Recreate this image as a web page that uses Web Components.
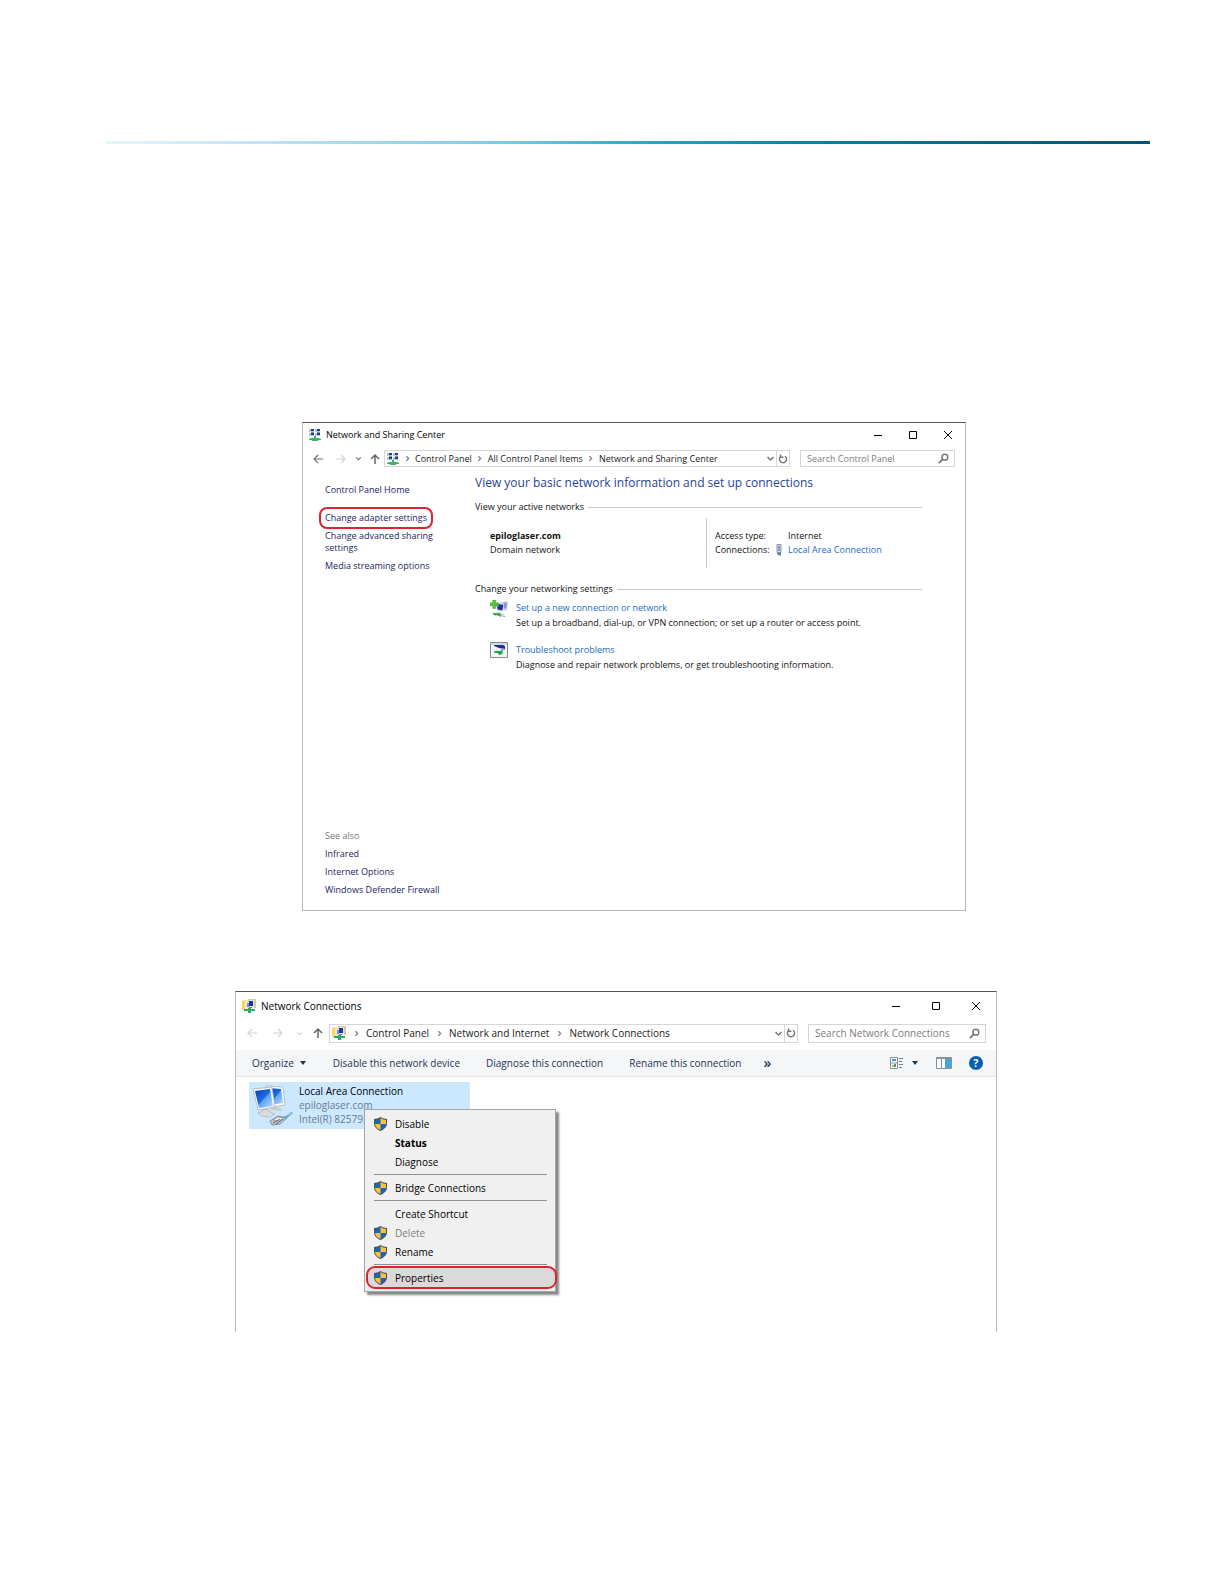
<!DOCTYPE html>
<html lang="en">
<head>
<meta charset="utf-8">
<title>Network setup</title>
<style>
  body {
    margin: 0;
    background: #fff;
    color: #111;
    font-family: "Open Sans", "Noto Sans", sans-serif;
  }

  main {
    display: flex;
    flex-direction: column;
  }

  gradient-rule { margin: 141px 74px 278px 106px; }

  .sharing {
    --text: 9px;
    --bar-height: 23px;
    --nav-height: 25px;
    --box-height: 17px;
    --nav-button: 23px;
    --nav-small: 13px;
    --nav-up: 19px;
    --crumb-gap: 16px;
    --search-width: 155px;
    --icon: 12px;
    --control: 35px;
    --edge: #b4b8b8;
    margin: 0 258px 80px 302px;
    min-height: 487px;
  }

  .connections {
    --text: 10px;
    --bar-height: 27px;
    --nav-height: 28px;
    --box-height: 19px;
    --nav-button: 26px;
    --nav-small: 16px;
    --nav-up: 22px;
    --crumb-gap: 20px;
    --search-width: 178px;
    --icon: 14px;
    --control: 40px;
    --edge: #b4b8b8;
    --edge-bottom: 0;
    margin: 0 227px 0 235px;
    min-height: 340px;
  }
</style>
</head>
<body>
<main>
  <gradient-rule></gradient-rule>

  <app-window class="sharing" heading="Network and Sharing Center" icon="sharing">
    <nav-bar slot="nav" icon="sharing" search="Search Control Panel" back
      path="Control Panel/All Control Panel Items/Network and Sharing Center"></nav-bar>
    <sharing-center></sharing-center>
  </app-window>

  <app-window class="connections" heading="Network Connections" icon="folder">
    <nav-bar slot="nav" icon="folder" search="Search Network Connections"
      path="Control Panel/Network and Internet/Network Connections"></nav-bar>
    <command-bar slot="nav"></command-bar>
    <connection-item name="Local Area Connection" domain="epiloglaser.com" device="Intel(R) 82579L">
      <context-menu>
        <menu-item shield>Disable</menu-item>
        <menu-item strong>Status</menu-item>
        <menu-item>Diagnose</menu-item>
        <hr>
        <menu-item shield>Bridge Connections</menu-item>
        <hr>
        <menu-item>Create Shortcut</menu-item>
        <menu-item shield disabled>Delete</menu-item>
        <menu-item shield>Rename</menu-item>
        <hr>
        <menu-item shield marked>Properties</menu-item>
      </context-menu>
    </connection-item>
  </app-window>
</main>

<script>
const icons = {
  sharing: ['0 0 12 12', `
    <path fill="#b4c4ea" d="M0 0h5v3H0zM6 0h5v3H6zM0 4h5v3H0zM6 4h5v3H6z"/>
    <path fill="#24389c" d="M2 0h3v2H2zM8 0h3v2H8zM2 4h3v2H2zM8 4h3v2H8z"/>
    <path fill="#8490b4" d="M2 3h3v1H2zM8 3h3v1H8z"/>
    <path fill="#35b56a" d="M5 7h2v2h3l2 1v1H9v1H3v-1H0v-1l2-1h3z"/>`],
  folder: ['0 0 14 14', `
    <path fill="#f6d860" d="M0 2l3-1v10H0z"/><path fill="#fbeaa0" d="M3 1h3v9H3z"/>
    <path fill="#d8cd90" d="M6 0h8v9H6z"/><path fill="#dfe5ef" d="M4 3h4v6H4zM7 1h5v8H7z"/>
    <path fill="#1d35a8" d="M7 2h4v5H7z"/><path fill="#6f8fe0" d="M5 4h2v4H5z"/>
    <path fill="#777f85" d="M7 8h3v1H7z"/>
    <path fill="#28a869" d="M6 9h3v1h4v2H9v2H6v-2H2v-2h4z"/>`],
  back: ['0 0 12 12', '<path fill="none" stroke="currentColor" stroke-width="1.2" d="M11 6H2M6 2 2 6l4 4"/>'],
  forward: ['0 0 12 12', '<path fill="none" stroke="currentColor" stroke-width="1.2" d="M1 6h9M6 2l4 4-4 4"/>'],
  up: ['0 0 12 12', '<path fill="none" stroke="currentColor" stroke-width="1.5" d="M6 11V2M2 6l4-4 4 4"/>'],
  down: ['0 0 12 12', '<path fill="none" stroke="currentColor" stroke-width="2" d="M2 4l4 4 4-4"/>'],
  crumb: ['0 0 12 12', '<path fill="none" stroke="currentColor" stroke-width="2" d="M4 2l4 4-4 4"/>'],
  refresh: ['0 0 12 12', '<path fill="none" stroke="currentColor" stroke-width="1.8" d="M8.500 2.700A4.300 4.300 0 1 1 3.500 2.700M3 .5v3.300h3.500"/>'],
  search: ['0 0 12 12', '<g fill="none" stroke="currentColor"><circle cx="7.500" cy="4.500" r="3.200" stroke-width="1.600"/><path stroke-width="2" d="M5 7 1 11"/></g>'],
  minimize: ['0 0 10 10', '<path stroke="currentColor" d="M1 5.500h8"/>'],
  maximize: ['0 0 10 10', '<path fill="none" stroke="currentColor" d="M1.500 1.500h7v7h-7z"/>'],
  close: ['0 0 10 10', '<path stroke="currentColor" d="M1 1l8 8M9 1 1 9"/>'],
  caret: ['0 0 8 8', '<path fill="currentColor" d="M1 2h6L4 6z"/>'],
  plug: ['0 0 8 12', `
    <path fill="#d3daea" stroke="#8893ad" d="M2 .5h4v8H2z"/><path stroke="#55608a" d="M4 2v5"/>
    <path fill="#4b6f9c" d="M2 9h4v2H3z"/><path fill="#72b6c6" d="M4 10h2v2H4z"/>`],
  setup: ['0 0 19 19', `
    <path fill="#ccd1ef" d="M11 2l8-1-1 10h-6z"/><path fill="#8b91c6" d="M14 3h4l-1 6h-3z"/>
    <path fill="#dce2f4" d="M6 3l9 1-1 8-7-1z"/><path fill="#20309c" d="M7 4l7 1-1 6-5-1z"/>
    <path fill="#5570cf" d="M7 4l3 1-2 4z"/>
    <path fill="#5cc034" stroke="#3c9a24" stroke-width=".5" d="M3 0h3v3h3v3H6v3H3V6H0V3h3z"/>
    <path fill="#b6dfc8" d="M1 14l7-1 8 2-4 2z"/><path fill="#25a05a" d="M3 14h7l1-1v5l-3-2H4z"/>
    <path fill="#8ba096" d="M11 16l5 1v1l-5-1z"/>`],
  trouble: ['0 0 18 16', `
    <path fill="#f5f7f8" stroke="#858b90" d="M.5.5h17v15H.5z"/><path fill="#d5dade" d="M1 1h16v2H1z"/>
    <path fill="#1c2f9c" d="M4 3h9l2 1v3l-6-1-5-2z"/><path fill="#8ea3dc" d="M10 6l5 1v1h-4z"/>
    <path fill="#bde0ca" d="M2 9l6-1 7 3-4 2z"/><path fill="#2a9f55" d="M5 9h5l3-1-1 4-3 1-1-2H4z"/>`],
  details: ['0 0 14 12', `
    <path fill="#fff" stroke="#8b9096" d="M.5.5h7v11h-7zM.5 6h7"/>
    <path fill="#4c91c9" d="M2 2h4v2H2z"/><path fill="#d7ac43" d="M2 8h2v2H2z"/><path fill="#479b66" d="M4 7h2v3H4z"/>
    <path stroke="#777d84" d="M9 1.500h4M9 4.500h3M9 7.500h4M9 10.500h3"/>`],
  pane: ['0 0 16 12', `
    <path fill="#fff" stroke="#8b9096" d="M.5.5h15v11H.5z"/><path stroke="#8b9096" d="M5.500 1v11M.5 1.500h15"/>
    <path fill="#45a2e4" d="M9 2h6v9H9z"/>`],
  shield: ['0 0 13 14', `
    <path fill="#4b545c" d="M6.500 0C8.500 1.300 10.500 2 13 2v4c0 4-3 6.500-6.500 8C3 12.500 0 10 0 6V2c2.500 0 4.500-.7 6.500-2z"/>
    <path fill="#1767b5" d="M6.500 1v6H1V3c2 0 3.800-.7 5.500-2zM6.500 7H12c-.3 3-2.500 4.800-5.500 6z"/>
    <path fill="#fac03d" d="M6.500 1C8.200 2.300 10 3 12 3v4H6.500zM1 7h5.500v6C3.500 11.800 1.300 10 1 7z"/>`],
  computers: ['0 0 42 42', `
    <defs><linearGradient id="scr" x1="0" y1="0" x2="1" y2="1">
      <stop offset="0" stop-color="#0a3cb4"/><stop offset=".5" stop-color="#1e6ee6"/>
      <stop offset=".52" stop-color="#5ba2f4"/><stop offset="1" stop-color="#b9dcfb"/></linearGradient></defs>
    <path fill="#c7cdd2" d="M19 21l9 2 3 3-12-1z"/>
    <path fill="#f6f8f9" stroke="#a6adb2" stroke-width=".7" d="M14 1l17 1 2 18-17 3z"/>
    <path fill="url(#scr)" d="M16 3l13 1 2 14-14 2z"/>
    <path fill="#d9dcdf" stroke="#a3a9ae" stroke-width=".6" d="M10 24l7 1 1 2 5 2-5 3-8-1-4-3 5-2z"/>
    <path fill="#f6f8f9" stroke="#a6adb2" stroke-width=".7" d="M1 4l19-2 3 20-17 3z"/>
    <path fill="url(#scr)" d="M3 6l15-2 3 17-14 2z"/>
    <path fill="#bfc5c8" stroke="#777f84" stroke-width=".8" d="M18 36l8-5 9 2-7 6-8 1z"/>
    <path fill="#eceeef" stroke="#81898e" stroke-width=".6" d="M21 35l5-3 6 1-5 3z"/>
    <path fill="none" stroke="#555d63" stroke-width=".8" d="M21 38l7-4M24 39l7-5"/>
    <path fill="#5ba8cf" d="M31 32l8-5 2 1-7 6z"/><path stroke="#d9e9f0" d="M33 31l6-3"/>`]
};

class UiIcon extends HTMLElement {
  connectedCallback() {
    const [box, shapes] = icons[this.getAttribute('name')];
    const [, , w, h] = box.split(' ');
    const width = this.getAttribute('size') || `${w}px`;
    this.attachShadow({ mode: 'open' }).innerHTML = `
      <style>
        :host { display: inline-flex; flex: none; align-items: center; justify-content: center; }
        svg { display: block; width: ${width}; aspect-ratio: ${w} / ${h}; }
      </style>
      <svg viewBox="${box}" aria-hidden="true">${shapes}</svg>
    `;
  }
}
customElements.define('ui-icon', UiIcon);

class GradientRule extends HTMLElement {
  connectedCallback() {
    this.attachShadow({ mode: 'open' }).innerHTML = `
      <style>
        :host {
          display: block;
          height: 3px;
          background: linear-gradient(90deg, #e6f6fb 0%, #b5e0f2 18%, #79cbea 38%, #2ba3c9 52%, #0882a8 67%, #00668e 84%, #00527c 100%);
        }
      </style>
    `;
  }
}
customElements.define('gradient-rule', GradientRule);

class AppWindow extends HTMLElement {
  connectedCallback() {
    const heading = this.getAttribute('heading');
    this.attachShadow({ mode: 'open' }).innerHTML = `
      <style>
        :host {
          display: flex;
          flex-direction: column;
          border: 1px solid var(--edge);
          border-top-color: #555;
          border-bottom-width: var(--edge-bottom, 1px);
          background: #fff;
          font-size: var(--text);
        }
        header {
          display: flex;
          align-items: center;
          height: var(--bar-height);
          padding-left: 6px;
        }
        h1 {
          flex: 1;
          margin: 0 0 0 5px;
          font-size: inherit;
          font-weight: 400;
          color: #000;
        }
        button {
          display: flex;
          justify-content: center;
          width: var(--control);
          padding: 0;
          border: 0;
          background: none;
          color: #000;
        }
        slot[name=nav] { display: block; }
        .body { flex: 1; display: flex; flex-direction: column; }
      </style>
      <header>
        <ui-icon name="${this.getAttribute('icon')}" size="var(--icon)"></ui-icon>
        <h1>${heading}</h1>
        <button aria-label="Minimize"><ui-icon name="minimize"></ui-icon></button>
        <button aria-label="Maximize"><ui-icon name="maximize"></ui-icon></button>
        <button aria-label="Close"><ui-icon name="close"></ui-icon></button>
      </header>
      <slot name="nav"></slot>
      <div class="body"><slot></slot></div>
    `;
  }
}
customElements.define('app-window', AppWindow);

class NavBar extends HTMLElement {
  connectedCallback() {
    const crumbs = this.getAttribute('path').split('/').map((name) => `
      <ui-icon class="sep" name="crumb" size="7px"></ui-icon><a href="#">${name}</a>`).join('');
    const search = this.getAttribute('search');
    const back = this.hasAttribute('back') ? '' : 'off';
    this.attachShadow({ mode: 'open' }).innerHTML = `
      <style>
        :host {
          display: flex;
          align-items: center;
          height: var(--nav-height);
          padding: 0 10px 0 3px;
          color: #777;
        }
        button {
          display: flex;
          flex: none;
          align-items: center;
          justify-content: center;
          width: var(--nav-button);
          padding: 0;
          border: 0;
          background: none;
          color: inherit;
        }
        .small { width: var(--nav-small); }
        .up { width: var(--nav-up); color: #666; }
        .off { color: #d2d2d2; }
        .address, label {
          display: flex;
          align-items: center;
          box-sizing: border-box;
          height: var(--box-height);
          border: 1px solid #d6d6d6;
        }
        .address { flex: 1; min-width: 0; padding-left: 2px; white-space: nowrap; }
        .sep { width: var(--crumb-gap); }
        a { color: #1a1a1a; text-decoration: none; }
        .toggle { width: 12px; margin-left: auto; }
        .refresh { width: 13px; align-self: stretch; border-left: 1px solid #d6d6d6; }
        label { width: var(--search-width); margin-left: 10px; padding: 0 5px 0 6px; }
        input {
          flex: 1;
          min-width: 0;
          padding: 0;
          border: 0;
          outline: 0;
          background: none;
          font: inherit;
        }
        input::placeholder { color: #7c7c7c; opacity: 1; }
      </style>
      <button class="${back}" aria-label="Back"><ui-icon name="back"></ui-icon></button>
      <button class="off" aria-label="Forward"><ui-icon name="forward"></ui-icon></button>
      <button class="small ${back}" aria-label="Recent"><ui-icon name="down" size="7px"></ui-icon></button>
      <button class="up" aria-label="Up"><ui-icon name="up"></ui-icon></button>
      <div class="address">
        <ui-icon name="${this.getAttribute('icon')}" size="var(--icon)"></ui-icon>${crumbs}
        <button class="toggle" aria-label="Previous locations"><ui-icon name="down" size="9px"></ui-icon></button>
        <button class="refresh" aria-label="Refresh"><ui-icon name="refresh" size="10px"></ui-icon></button>
      </div>
      <label><input type="search" aria-label="${search}" placeholder="${search}"><ui-icon name="search" size="11px"></ui-icon></label>
    `;
  }
}
customElements.define('nav-bar', NavBar);

class SectionTitle extends HTMLElement {
  connectedCallback() {
    this.attachShadow({ mode: 'open' }).innerHTML = `
      <style>
        :host { display: flex; align-items: center; gap: 4px; line-height: 12px; }
        h3 { margin: 0; font-size: inherit; font-weight: 400; }
        :host::after { content: ""; flex: 1; height: 1px; background: #c8c8c8; }
      </style>
      <h3><slot></slot></h3>
    `;
  }
}
customElements.define('section-title', SectionTitle);

class TaskLink extends HTMLElement {
  connectedCallback() {
    this.attachShadow({ mode: 'open' }).innerHTML = `
      <style>
        :host { display: flex; gap: 8px; padding-left: 15px; line-height: 15px; }
        ui-icon { width: 18px; align-self: flex-start; }
        a { color: #1d6cc0; text-decoration: none; }
        p { margin: 0; }
      </style>
      <ui-icon name="${this.getAttribute('icon')}"></ui-icon>
      <div>
        <a href="#">${this.getAttribute('label')}</a>
        <p><slot></slot></p>
      </div>
    `;
  }
}
customElements.define('task-link', TaskLink);

class SharingCenter extends HTMLElement {
  connectedCallback() {
    this.attachShadow({ mode: 'open' }).innerHTML = `
      <style>
        :host { display: flex; flex: 1; }
        a { color: #1d6cc0; text-decoration: none; }
        nav {
          display: flex;
          flex-direction: column;
          align-items: flex-start;
          gap: 6px;
          box-sizing: border-box;
          width: 172px;
          padding: 13px 30px 14px 22px;
          line-height: 12px;
        }
        nav a { color: #23235f; }
        .home { margin-bottom: 10px; }
        .marked {
          margin: -3px -4px;
          padding: 3px 4px;
          border-radius: 6px;
          outline: 2px solid #d8262c;
        }
        .also { margin-top: auto; color: #777; }
        section { flex: 1; padding: 4px 43px 0 0; }
        h2 {
          margin: 0 0 10px;
          font-size: 12px;
          font-weight: 400;
          line-height: 16px;
          color: #1f4596;
        }
        .network {
          display: grid;
          grid-template-columns: 231px 1fr;
          margin: 5px 0 15px;
          line-height: 14px;
        }
        .name { padding: 11px 15px; }
        .name p { margin: 0; }
        dl {
          display: grid;
          grid-template-columns: 73px 1fr;
          align-content: center;
          margin: 0;
          padding-left: 8px;
          border-left: 1px solid #c8c8c8;
        }
        dt { display: flex; justify-content: space-between; padding-right: 5px; }
        dd { margin: 0; }
        task-link { margin-top: 5px; }
        task-link + task-link { margin-top: 12px; }
      </style>
      <nav>
        <a class="home" href="#">Control Panel Home</a>
        <a class="marked" href="#">Change adapter settings</a>
        <a href="#">Change advanced sharing settings</a>
        <a href="#">Media streaming options</a>
        <span class="also">See also</span>
        <a href="#">Infrared</a>
        <a href="#">Internet Options</a>
        <a href="#">Windows Defender Firewall</a>
      </nav>
      <section>
        <h2>View your basic network information and set up connections</h2>
        <section-title>View your active networks</section-title>
        <div class="network">
          <div class="name"><strong>epiloglaser.com</strong><p>Domain network</p></div>
          <dl>
            <dt>Access type:</dt><dd>Internet</dd>
            <dt>Connections: <ui-icon name="plug"></ui-icon></dt><dd><a href="#">Local Area Connection</a></dd>
          </dl>
        </div>
        <section-title>Change your networking settings</section-title>
        <task-link icon="setup" label="Set up a new connection or network">Set up a broadband, dial-up, or VPN connection; or set up a router or access point.</task-link>
        <task-link icon="trouble" label="Troubleshoot problems">Diagnose and repair network problems, or get troubleshooting information.</task-link>
      </section>
    `;
  }
}
customElements.define('sharing-center', SharingCenter);

class CommandBar extends HTMLElement {
  connectedCallback() {
    this.attachShadow({ mode: 'open' }).innerHTML = `
      <style>
        :host {
          display: flex;
          align-items: center;
          gap: 26px;
          box-sizing: border-box;
          height: 27px;
          margin-top: 3px;
          padding: 0 13px 0 16px;
          border-bottom: 1px solid #e4e7ea;
          background: #f4f6f8;
        }
        button {
          display: flex;
          align-items: center;
          gap: 5px;
          padding: 0;
          border: 0;
          background: none;
          color: #1e3557;
          font: inherit;
          white-space: nowrap;
        }
        .more { margin-left: -4px; font-size: 14px; font-weight: 600; line-height: 14px; }
        .tools { display: flex; align-items: center; gap: 17px; margin-left: auto; }
        .view { gap: 7px; }
        .help {
          justify-content: center;
          width: 14px;
          height: 14px;
          border-radius: 50%;
          background: #0a5fb0;
          color: #fff;
          font-weight: 700;
        }
      </style>
      <button>Organize <ui-icon name="caret"></ui-icon></button>
      <button>Disable this network device</button>
      <button>Diagnose this connection</button>
      <button>Rename this connection</button>
      <button class="more">»</button>
      <div class="tools">
        <button class="view" aria-label="Change view"><ui-icon name="details"></ui-icon><ui-icon name="caret"></ui-icon></button>
        <button aria-label="Preview pane"><ui-icon name="pane"></ui-icon></button>
        <button class="help">?</button>
      </div>
    `;
  }
}
customElements.define('command-bar', CommandBar);

class ConnectionItem extends HTMLElement {
  connectedCallback() {
    this.attachShadow({ mode: 'open' }).innerHTML = `
      <style>
        :host {
          position: relative;
          display: flex;
          gap: 5px;
          box-sizing: border-box;
          width: 221px;
          height: 47px;
          margin: 5px 0 0 13px;
          padding: 2px 3px;
          background: #cce8ff;
          line-height: 14px;
        }
        p { margin: 0; color: #6b7a88; }
        .name { color: #000; }
        ::slotted(context-menu) { position: absolute; top: 27px; left: 115px; }
      </style>
      <ui-icon name="computers"></ui-icon>
      <div>
        <p class="name">${this.getAttribute('name')}</p>
        <p>${this.getAttribute('domain')}</p>
        <p>${this.getAttribute('device')}</p>
      </div>
      <slot></slot>
    `;
  }
}
customElements.define('connection-item', ConnectionItem);

class ContextMenu extends HTMLElement {
  connectedCallback() {
    this.setAttribute('role', 'menu');
    this.attachShadow({ mode: 'open' }).innerHTML = `
      <style>
        :host {
          display: block;
          box-sizing: border-box;
          width: 192px;
          padding: 4px 0 4px 3px;
          border: 1px solid #a5a5a5;
          background: #f0f0f0;
          box-shadow: 3px 3px 2px #888;
        }
        ::slotted(hr) {
          height: 1px;
          margin: 3px 8px 3px 6px;
          border: 0;
          background: #919191;
        }
      </style>
      <slot></slot>
    `;
  }
}
customElements.define('context-menu', ContextMenu);

class MenuItem extends HTMLElement {
  connectedCallback() {
    const disabled = this.hasAttribute('disabled');
    this.attachShadow({ mode: 'open' }).innerHTML = `
      <style>
        :host { display: block; }
        button {
          display: flex;
          align-items: center;
          width: 100%;
          height: 19px;
          padding: 0;
          border: 0;
          background: none;
          color: #000;
          font: inherit;
        }
        .icon { display: flex; width: 21px; padding-left: 6px; }
        :host([strong]) button { font-weight: 700; }
        :host([disabled]) button { color: #7d7d7d; }
        :host([marked]) button {
          border-radius: 7px;
          outline: 2px solid #d8262c;
          background: #d9dad9;
        }
      </style>
      <button role="menuitem"${disabled ? ' disabled' : ''}>
        <span class="icon">${this.hasAttribute('shield') ? '<ui-icon name="shield"></ui-icon>' : ''}</span>
        <slot></slot>
      </button>
    `;
  }
}
customElements.define('menu-item', MenuItem);
</script>
</body>
</html>
